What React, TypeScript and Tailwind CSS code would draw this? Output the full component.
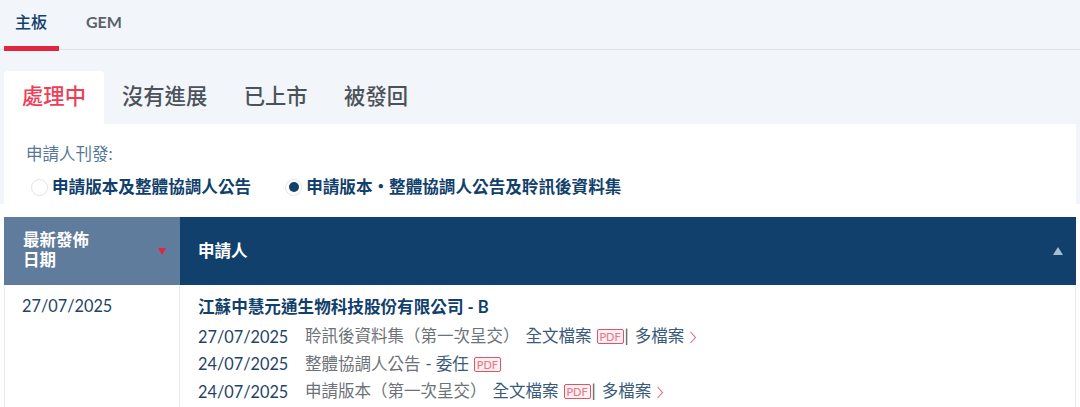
import React from "react";

function Pdf() {
  return (
    <span className="inline-flex items-center justify-center w-[27px] h-[15px] border border-[#e0536c] bg-[#fdf0f2] rounded-[2px] text-[11px] leading-none font-medium text-[#e8798c] font-['Lato',sans-serif] ml-[5px]">
      PDF
    </span>
  );
}

function Chevron() {
  return (
    <svg width="8" height="13" viewBox="0 0 8 13" className="ml-[5px] mt-[2px]" fill="none">
      <path d="M1.5 1l5 5.5-5 5.5" stroke="#e8687f" strokeWidth="1.1" />
    </svg>
  );
}

function Row({ date, label, full, more, tail }: { date: string; label: string; full?: boolean; more?: boolean; tail?: string }) {
  return (
    <div className="flex items-center h-[27.5px] text-[16.5px] text-[#3a5a7a] whitespace-pre">
      <span className="w-[107px] text-[16.3px] text-[#1f4468]">{date}</span>
      <span className="text-[#6d7278]">{label}</span>
      {full && <span className="ml-[6px]">全文檔案</span>}
      {tail && <span className="text-[#3a5a7a] ml-[5px]">{tail}</span>}
      <Pdf />
      {more && (
        <>
          <span className="text-[#555] ml-[1px]">|</span>
          <span className="ml-[6px]">多檔案</span>
          <Chevron />
        </>
      )}
    </div>
  );
}

export default function App() {
  return (
    <div className="w-[1080px] h-[407px] overflow-hidden bg-white font-['Lato','Noto_Sans_CJK_TC',sans-serif]">
      <div className="bg-[#f2f6fa] h-[204px] flex flex-col">
        <div className="h-[50px] border-b border-[#dfe3e8] flex items-start pl-[4px]">
          <div className="w-[55px] h-[51px] border-b-[5px] border-[#e3263f] flex items-center pl-[11px] pb-[3px] text-[16px] font-medium text-[#10406b] shrink-0">
            主板
          </div>
          <div className="ml-[27px] h-[44px] flex items-center text-[16px] font-bold text-[#5b6168]">GEM</div>
        </div>
        <div className="mt-[21px] h-[53px] flex items-stretch pl-[4px]">
          <div className="w-[100px] bg-white rounded-t-[4px] flex items-center justify-center text-[21.3px] font-medium text-[#ee3f56] pb-[2px]">
            處理中
          </div>
          <div className="flex items-center pl-[18px] gap-[36.5px] text-[21.3px] font-medium text-[#4c5259] pb-[2px]">
            <span>沒有進展</span>
            <span>已上市</span>
            <span>被發回</span>
          </div>
        </div>
        <div className="mx-[4px] w-[1072px] h-[80px] bg-white pl-[22px] pt-[19px]">
          <div className="text-[16.5px] leading-[22px] text-[#56789a]">申請人刊發:</div>
          <div className="flex items-center mt-[12px] h-[20px] text-[16.6px] font-semibold text-[#10406b]">
            <span className="ml-[5px] w-[17px] h-[17px] rounded-full border border-[#dfe3e8] bg-white" />
            <span className="ml-[4px]">申請版本及整體協調人公告</span>
            <span className="ml-[34px] w-[17px] h-[17px] rounded-full border border-[#dfe3e8] bg-white flex items-center justify-center">
              <span className="w-[10px] h-[10px] rounded-full bg-[#10406b]" />
            </span>
            <span className="ml-[4px]">申請版本‧整體協調人公告及聆訊後資料集</span>
          </div>
        </div>
      </div>
      <div className="mt-[13px] mx-[4px] w-[1072px] flex h-[68px] text-white text-[16.5px] font-semibold">
        <div className="w-[176px] shrink-0 bg-[#5f7c9c] flex items-center justify-between pl-[19px] pr-[14px] leading-[20px]">
          <div className="pb-[2px]">
            最新發佈
            <br />
            日期
          </div>
          <span className="w-0 h-0 border-x-[4.5px] border-x-transparent border-t-[7px] border-t-[#e3263f]" />
        </div>
        <div className="flex-1 bg-[#10406b] flex items-center justify-between pl-[18px] pr-[13px]">
          <span>申請人</span>
          <span className="w-0 h-0 border-x-[5px] border-x-transparent border-b-[8px] border-b-[#a9bdd2]" />
        </div>
      </div>
      <div className="mx-[4px] w-[1072px] flex h-[122px] border-r border-l border-[#e6ebf0]">
        <div className="w-[175px] shrink-0 border-r border-[#e6ebf0] pl-[17px] pt-[9px] text-[16.3px] leading-[24px] text-[#1f4468]">
          27/07/2025
        </div>
        <div className="pl-[18px] pt-[8px]">
          <div className="text-[16.6px] leading-[28px] font-semibold text-[#10406b] mb-[2px]">
            江蘇中慧元通生物科技股份有限公司<span className="font-bold"> - B</span>
          </div>
          <Row date="27/07/2025" label={"聆訊後資料集\uFF08第一次呈交\uFF09"} full more />
          <Row date="24/07/2025" label="整體協調人公告" tail="- 委任" />
          <Row date="24/07/2025" label={"申請版本\uFF08第一次呈交\uFF09"} full more />
        </div>
      </div>
    </div>
  );
}
